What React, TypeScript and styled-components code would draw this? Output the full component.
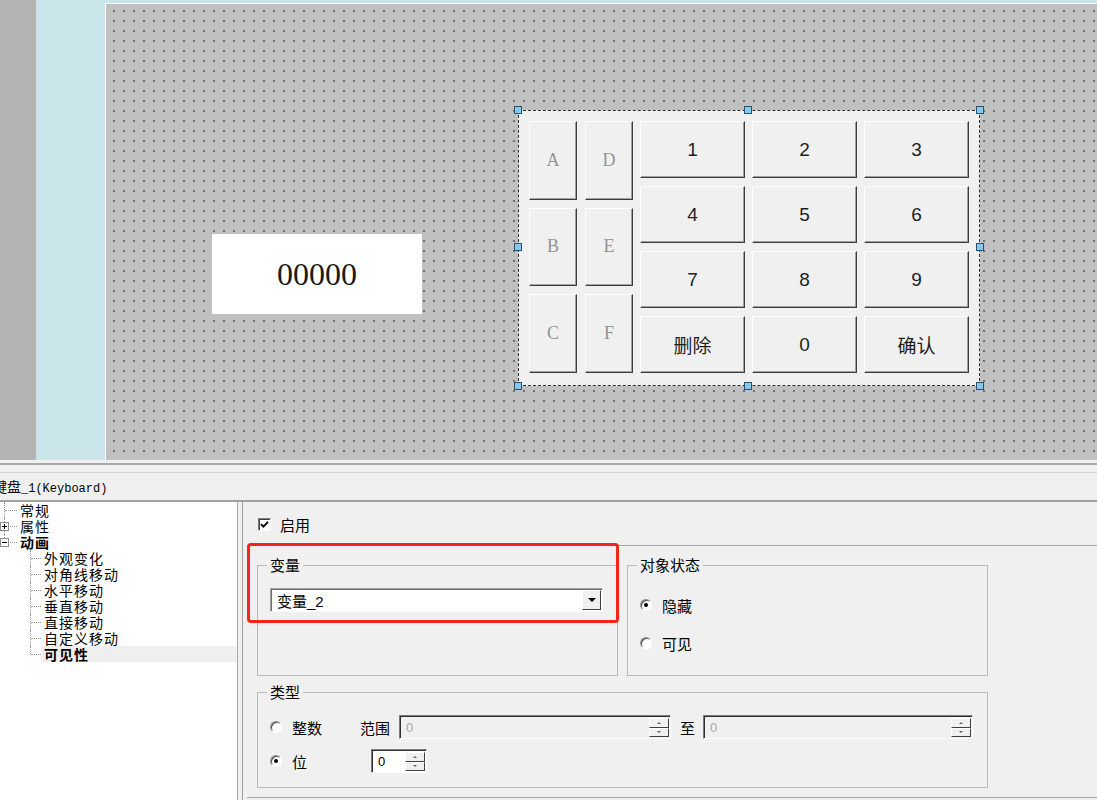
import React from "react";
import styled, { createGlobalStyle, css } from "styled-components";

const GlobalStyle = createGlobalStyle`
  html, body { margin: 0; padding: 0; background: #f0f0f0; }
  body { font-family: "Noto Sans CJK SC", "Liberation Sans", sans-serif; color: #000; }
  * { box-sizing: border-box; }
`;

const Screen = styled.div`
  width: 1097px;
  height: 800px;
  overflow: hidden;
  display: flex;
  flex-direction: column;
  background: #f0f0f0;
`;

/* ---------- editor area ---------- */

const Editor = styled.div`
  height: 460px;
  flex-shrink: 0;
  display: flex;
`;

const SideStrip = styled.div`
  width: 36px;
  background: #b4b4b2;
`;

const Workspace = styled.div`
  flex: 1;
  display: flex;
  background: #cbe6ea;
  padding: 3px 0 0 69px;
`;

const Canvas = styled.div`
  flex: 1;
  position: relative;
  border-top: 1px solid #fff;
  border-left: 1px solid #fff;
  background-color: #c0c0c0;
  background-image: linear-gradient(90deg, #c0c0c0 8px, transparent 8px),
    linear-gradient(#c0c0c0 8px, #707070 8px);
  background-size: 10px 10px;
  background-position: -1px -2px;
`;

const NumberDisplay = styled.div`
  position: absolute;
  left: 106px;
  top: 230px;
  width: 210px;
  height: 80px;
  background: #fff;
  display: flex;
  align-items: center;
  justify-content: center;
  font-family: "Liberation Serif", serif;
  font-size: 32px;
  color: #1a1a1a;
`;

const Keypad = styled.div`
  position: absolute;
  left: 412px;
  top: 106px;
  width: 462px;
  height: 276px;
  border: 1px dashed #2e2e2e;
  background: #f0f0f0;
  padding: 10px 9px 12px 10px;
  display: flex;
  gap: 7px;
`;

type Pos = "start" | "mid" | "end";
const handleOffset = (p: Pos) =>
  p === "start" ? "-5px" : p === "mid" ? "calc(50% - 5px)" : "calc(100% - 3px)";

const Handle = styled.span<{ $x: Pos; $y: Pos }>`
  position: absolute;
  left: ${(p) => handleOffset(p.$x)};
  top: ${(p) => handleOffset(p.$y)};
  width: 8px;
  height: 8px;
  background: #86c9f0;
  border: 1px solid #2b4f6e;
  z-index: 1;
`;

const LetterPad = styled.div`
  display: grid;
  grid-template-columns: 48px 48px;
  grid-template-rows: repeat(3, 1fr);
  gap: 8px;
`;

const NumberPad = styled.div`
  display: grid;
  grid-template-columns: repeat(3, 105px);
  grid-template-rows: repeat(4, 1fr);
  gap: 8px 7px;
`;

const Key = styled.div<{ $letter?: boolean }>`
  display: flex;
  align-items: center;
  justify-content: center;
  background: #f0f0f0;
  border: 1px solid;
  border-color: #fff #3c3c3c #3c3c3c #fff;
  box-shadow: inset -1px -1px 0 #a0a0a0;
  font-family: "Liberation Sans", "Noto Sans CJK SC", sans-serif;
  font-size: 19px;
  color: #1e1e1e;
  ${(p) =>
    p.$letter &&
    css`
      font-family: "Liberation Serif", serif;
      font-size: 18px;
      color: #949494;
    `}
`;

/* ---------- dock area ---------- */

const Dock = styled.div`
  flex: 1;
  display: flex;
  flex-direction: column;
  padding-top: 3px;
  background: #f0f0f0;
`;

const Splitter = styled.div`
  height: 10px;
  border-top: 2px solid #a9a9a9;
  border-bottom: 1px solid #d2d2d2;
`;

const TitleBar = styled.div`
  height: 29px;
  line-height: 27px;
  border-bottom: 2px solid #a0a0a0;
  overflow: hidden;
  font-family: "Liberation Mono", "Noto Sans CJK SC", monospace;
  font-size: 12px;
  white-space: nowrap;
`;

const TitleText = styled.span`
  display: inline-block;
  margin-left: -7px;
`;

const Hanzi = styled.span`
  font-family: "Noto Sans CJK SC", sans-serif;
  font-size: 14px;
`;

const DockBody = styled.div`
  flex: 1;
  display: flex;
  gap: 4px;
`;

const Tree = styled.div`
  width: 238px;
  background: #fff;
  border-right: 1px solid #a8a8a8;
`;

const TreeRow = styled.div<{ $level: number; $last?: boolean }>`
  position: relative;
  height: 16px;
  display: flex;
  align-items: center;
  padding-left: ${(p) => (p.$level ? 41 : 17)}px;
  &::before {
    content: "";
    position: absolute;
    top: 8px;
    left: ${(p) => (p.$level ? 31 : 5)}px;
    width: ${(p) => (p.$level ? 10 : 12)}px;
    border-top: 1px dotted #9a9a9a;
  }
  &::after {
    content: "";
    position: absolute;
    top: 0;
    left: ${(p) => (p.$level ? 30 : 4)}px;
    height: ${(p) => (p.$last ? 8 : 16)}px;
    border-left: 1px dotted #9a9a9a;
  }
`;

const Toggle = styled.span<{ $open?: boolean }>`
  position: absolute;
  left: 0;
  top: 4px;
  width: 9px;
  height: 9px;
  border: 1px solid #8c8c8c;
  background: #fff;
  z-index: 1;
  &::before {
    content: "";
    position: absolute;
    left: 1px;
    top: 3px;
    width: 5px;
    height: 1px;
    background: #000;
  }
  ${(p) =>
    !p.$open &&
    css`
      &::after {
        content: "";
        position: absolute;
        left: 3px;
        top: 1px;
        width: 1px;
        height: 5px;
        background: #000;
      }
    `}
`;

const TreeLabel = styled.span<{ $bold?: boolean; $selected?: boolean }>`
  height: 16px;
  padding: 0 3px;
  font-size: 14px;
  letter-spacing: 1px;
  line-height: 16px;
  font-weight: ${(p) => (p.$bold ? 700 : 400)};
  ${(p) =>
    p.$selected &&
    css`
      flex: 1;
      background: #efefef;
    `}
`;

const PropPanel = styled.div`
  flex: 1;
  position: relative;
  border-left: 1px solid #a0a0a0;
  padding-left: 4px;
`;

const CheckRow = styled.label`
  display: flex;
  align-items: center;
  height: 18px;
  margin: 13px 0 0 11px;
  font-size: 15px;
  gap: 9px;
`;

const CheckBox = styled.span`
  width: 13px;
  height: 13px;
  background: #fff;
  border: 1px solid;
  border-color: #808080 #fff #fff #808080;
  box-shadow: inset 1px 1px 0 #404040;
  display: flex;
  align-items: center;
  justify-content: center;
`;

const Frame = styled.div`
  margin-top: 12px;
  height: 253px;
  border-top: 1px solid #a8a8a8;
  border-bottom: 1px solid #a8a8a8;
  padding: 11px 0 0 10px;
`;

const GroupGrid = styled.div`
  display: grid;
  grid-template-columns: 361px 361px;
  grid-template-rows: 119px 104px;
  column-gap: 9px;
  row-gap: 8px;
`;

const Group = styled.fieldset<{ $span?: boolean }>`
  margin: 0;
  padding: 0;
  min-width: 0;
  border: 1px solid #bababa;
  ${(p) => p.$span && "grid-column: 1 / span 2;"}
`;

const Legend = styled.legend`
  margin-left: 9px;
  padding: 0 3px;
  font-size: 15px;
  line-height: 16px;
`;

const Combo = styled.div`
  margin: 15px 0 0 12px;
  width: 333px;
  height: 24px;
  display: flex;
  align-items: center;
  background: #fff;
  border: 1px solid;
  border-color: #a0a0a0 #fff #fff #a0a0a0;
  box-shadow: inset 1px 1px 0 #6e6e6e;
  padding: 1px 1px 1px 6px;
  font-family: "Liberation Sans", "Noto Sans CJK SC", sans-serif;
  font-size: 15px;
`;

const ComboText = styled.span`
  flex: 1;
`;

const DropButton = styled.span`
  width: 19px;
  height: 20px;
  background: #f0f0f0;
  border: 1px solid;
  border-color: #fff #404040 #404040 #fff;
  display: flex;
  align-items: center;
  justify-content: center;
  &::after {
    content: "";
    border-left: 4px solid transparent;
    border-right: 4px solid transparent;
    border-top: 4px solid #000;
  }
`;

const OptionList = styled.div<{ $top: number; $gap: number; $height: number }>`
  margin-top: ${(p) => p.$top}px;
  padding-left: 12px;
  display: flex;
  flex-direction: column;
  gap: ${(p) => p.$gap}px;
  & > * {
    height: ${(p) => p.$height}px;
  }
`;

const OptionRow = styled.div`
  display: flex;
  align-items: center;
  font-size: 15px;
`;

const Radio = styled.span<{ $checked?: boolean }>`
  position: relative;
  width: 12px;
  height: 12px;
  margin-right: 10px;
  flex-shrink: 0;
  border-radius: 50%;
  background: #fff;
  border: 1px solid;
  border-color: #8a8a8a #fff #fff #8a8a8a;
  box-shadow: inset 1px 1px 0 #505050;
  ${(p) =>
    p.$checked &&
    css`
      &::after {
        content: "";
        position: absolute;
        left: 3px;
        top: 3px;
        width: 4px;
        height: 4px;
        border-radius: 50%;
        background: #000;
      }
    `}
`;

const OptionText = styled.span<{ $w?: number }>`
  ${(p) => p.$w && `width: ${p.$w}px;`}
  flex-shrink: 0;
`;

const FieldLabel = styled.span<{ $before?: number; $after?: number }>`
  margin-left: ${(p) => p.$before ?? 0}px;
  margin-right: ${(p) => p.$after ?? 0}px;
`;

const Spin = styled.div<{ $w: number; $disabled?: boolean }>`
  width: ${(p) => p.$w}px;
  height: 24px;
  display: flex;
  align-items: center;
  flex-shrink: 0;
  background: ${(p) => (p.$disabled ? "#f0f0f0" : "#fff")};
  border: 1px solid;
  border-color: #7c7c7c #fff #fff #7c7c7c;
  box-shadow: inset 1px 1px 0 #303030;
  padding: 2px 1px 1px 6px;
`;

const SpinValue = styled.span<{ $disabled?: boolean }>`
  flex: 1;
  font-family: "Liberation Sans", sans-serif;
  font-size: 13px;
  color: ${(p) => (p.$disabled ? "#a8a8a8" : "#000")};
`;

const SpinButtons = styled.div`
  width: 20px;
  align-self: stretch;
  display: flex;
  flex-direction: column;
`;

const SpinButton = styled.span<{ $down?: boolean }>`
  flex: 1;
  position: relative;
  background: #f0f0f0;
  border: 1px solid;
  border-color: #fff #404040 #404040 #fff;
  &::after {
    content: "";
    position: absolute;
    left: 50%;
    top: 50%;
    transform: translate(-50%, -50%);
    border-left: 2px solid transparent;
    border-right: 2px solid transparent;
    ${(p) => (p.$down ? "border-top: 2px solid #606060;" : "border-bottom: 2px solid #606060;")}
  }
`;

const Highlight = styled.div`
  position: absolute;
  left: 4px;
  top: 41px;
  width: 372px;
  height: 80px;
  border: 3px solid #f4261c;
  border-radius: 4px;
  pointer-events: none;
`;

const SpinBox = ({ w, value, disabled }: { w: number; value: string; disabled?: boolean }) => (
  <Spin $w={w} $disabled={disabled}>
    <SpinValue $disabled={disabled}>{value}</SpinValue>
    <SpinButtons>
      <SpinButton />
      <SpinButton $down />
    </SpinButtons>
  </Spin>
);

const letters = ["A", "D", "B", "E", "C", "F"];
const numbers = ["1", "2", "3", "4", "5", "6", "7", "8", "9", "删除", "0", "确认"];

const handles: [Pos, Pos][] = [
  ["start", "start"],
  ["mid", "start"],
  ["end", "start"],
  ["start", "mid"],
  ["end", "mid"],
  ["start", "end"],
  ["mid", "end"],
  ["end", "end"],
];

const treeItems = [
  { label: "常规", level: 0 },
  { label: "属性", level: 0, toggle: "closed" },
  { label: "动画", level: 0, toggle: "open", bold: true, last: true },
  { label: "外观变化", level: 1 },
  { label: "对角线移动", level: 1 },
  { label: "水平移动", level: 1 },
  { label: "垂直移动", level: 1 },
  { label: "直接移动", level: 1 },
  { label: "自定义移动", level: 1 },
  { label: "可见性", level: 1, bold: true, selected: true, last: true },
];

export default function App() {
  return (
    <Screen>
      <GlobalStyle />
      <Editor>
        <SideStrip />
        <Workspace>
          <Canvas>
            <NumberDisplay>00000</NumberDisplay>
            <Keypad>
              {handles.map(([x, y]) => (
                <Handle key={x + y} $x={x} $y={y} />
              ))}
              <LetterPad>
                {letters.map((l) => (
                  <Key key={l} $letter>
                    {l}
                  </Key>
                ))}
              </LetterPad>
              <NumberPad>
                {numbers.map((n) => (
                  <Key key={n}>{n}</Key>
                ))}
              </NumberPad>
            </Keypad>
          </Canvas>
        </Workspace>
      </Editor>

      <Dock>
        <Splitter />
        <TitleBar>
          <TitleText>
            <Hanzi>键盘</Hanzi>_1(Keyboard)
          </TitleText>
        </TitleBar>
        <DockBody>
          <Tree>
            {treeItems.map((item) => (
              <TreeRow key={item.label} $level={item.level} $last={item.last}>
                {item.toggle && <Toggle $open={item.toggle === "open"} />}
                <TreeLabel $bold={item.bold} $selected={item.selected}>
                  {item.label}
                </TreeLabel>
              </TreeRow>
            ))}
          </Tree>

          <PropPanel>
            <CheckRow>
              <CheckBox>
                <svg width="9" height="9" viewBox="0 0 9 9">
                  <path d="M1 4.2 L3.4 6.6 L8 1.8" stroke="#000" strokeWidth="1.8" fill="none" />
                </svg>
              </CheckBox>
              启用
            </CheckRow>
            <Frame>
              <GroupGrid>
                <Group>
                  <Legend>变量</Legend>
                  <Combo>
                    <ComboText>变量_2</ComboText>
                    <DropButton />
                  </Combo>
                </Group>
                <Group>
                  <Legend>对象状态</Legend>
                  <OptionList $top={22} $gap={18} $height={20}>
                    <OptionRow>
                      <Radio $checked />
                      <OptionText>隐藏</OptionText>
                    </OptionRow>
                    <OptionRow>
                      <Radio />
                      <OptionText>可见</OptionText>
                    </OptionRow>
                  </OptionList>
                </Group>
                <Group $span>
                  <Legend>类型</Legend>
                  <OptionList $top={15} $gap={10} $height={24}>
                    <OptionRow>
                      <Radio />
                      <OptionText $w={68}>整数</OptionText>
                      <FieldLabel $after={9}>范围</FieldLabel>
                      <SpinBox w={272} value="0" disabled />
                      <FieldLabel $before={9} $after={8}>
                        至
                      </FieldLabel>
                      <SpinBox w={270} value="0" disabled />
                    </OptionRow>
                    <OptionRow>
                      <Radio $checked />
                      <OptionText $w={79}>位</OptionText>
                      <SpinBox w={56} value="0" />
                    </OptionRow>
                  </OptionList>
                </Group>
              </GroupGrid>
            </Frame>
            <Highlight />
          </PropPanel>
        </DockBody>
      </Dock>
    </Screen>
  );
}
